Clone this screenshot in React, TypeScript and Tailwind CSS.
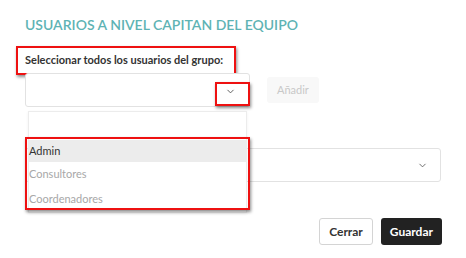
import { ChevronDown } from 'lucide-react'

const GRUPOS = ['Admin', 'Consultores', 'Coordenadores']

export default function App() {
  return (
    <div className="w-[466px] h-[258px] bg-white overflow-hidden px-[25px] pt-[16px]" style={{ fontFamily: 'Lato, "Open Sans", sans-serif' }}>
      <h2 className="text-[14px] leading-[18px] text-[#5eb3b4] font-semibold">USUARIOS A NIVEL CAPITAN DEL EQUIPO</h2>

      <div className="relative mt-[13px] h-[26px] flex items-center">
        <span className="text-[11px] font-bold text-[#333]">Seleccionar todos los usuarios del grupo:</span>
        <Mark className="-left-[9px] -top-[1px] w-[220px] h-[29px]" />
      </div>

      <div className="flex items-start gap-[17px]">
        <div className="relative w-[225px] h-[34px] border border-[#e2e2e2] rounded-[3px] bg-white">
          <ChevronDown className="absolute right-[13px] top-[12px] w-[11px] h-[11px] text-[#555]" strokeWidth={2} />
          <Mark className="-right-[1px] top-[8px] w-[35px] h-[24px]" />
        </div>
        <button className="mt-[4px] h-[26px] px-[10px] rounded-[3px] bg-[#f8f8f8] text-[11px] text-[#c8c8c8]">Añadir</button>
      </div>

      <div className="relative mt-[12px]">
        <div className="h-[29px]" />
        <div className="relative h-[34px] border border-[#e2e2e2] rounded-[3px] bg-white">
          <ChevronDown className="absolute right-[12px] top-[11px] w-[11px] h-[11px] text-[#555]" strokeWidth={1.8} />
        </div>

        <div className="absolute left-[3px] -top-[8px] w-[219px] bg-white border border-[#ececec] shadow-[0_1px_3px_rgba(0,0,0,0.06)]">
          <div className="h-[28px]" />
          <div className="relative flex flex-col">
            {GRUPOS.map((g, i) => (
              <div key={g}
                className={`flex items-center text-[11px] ${i === 0 ? 'h-[22px] bg-[#ececec] text-[#333]' : 'h-[25px] text-[#a8a8a8]'}`}>
                {g}
              </div>
            ))}
            <Mark className="-left-[4px] -top-[3px] w-[225px] h-[73px]" />
          </div>
        </div>
      </div>

      <div className="flex justify-end gap-[8px] mt-[36px] -mr-[1px]">
        <button className="h-[27px] px-[9px] border border-[#d4d4d4] rounded-[3px] bg-white text-[12px] font-bold text-[#333]">Cerrar</button>
        <button className="h-[27px] px-[9px] rounded-[3px] bg-[#222] text-[12px] font-bold text-white">Guardar</button>
      </div>
    </div>
  )
}

function Mark({ className }: { className: string }) {
  return (
    <div className={`absolute pointer-events-none border-2 border-[#ee1111] shadow-[1px_2px_3px_rgba(0,0,0,0.45)] ${className}`} />
  )
}
